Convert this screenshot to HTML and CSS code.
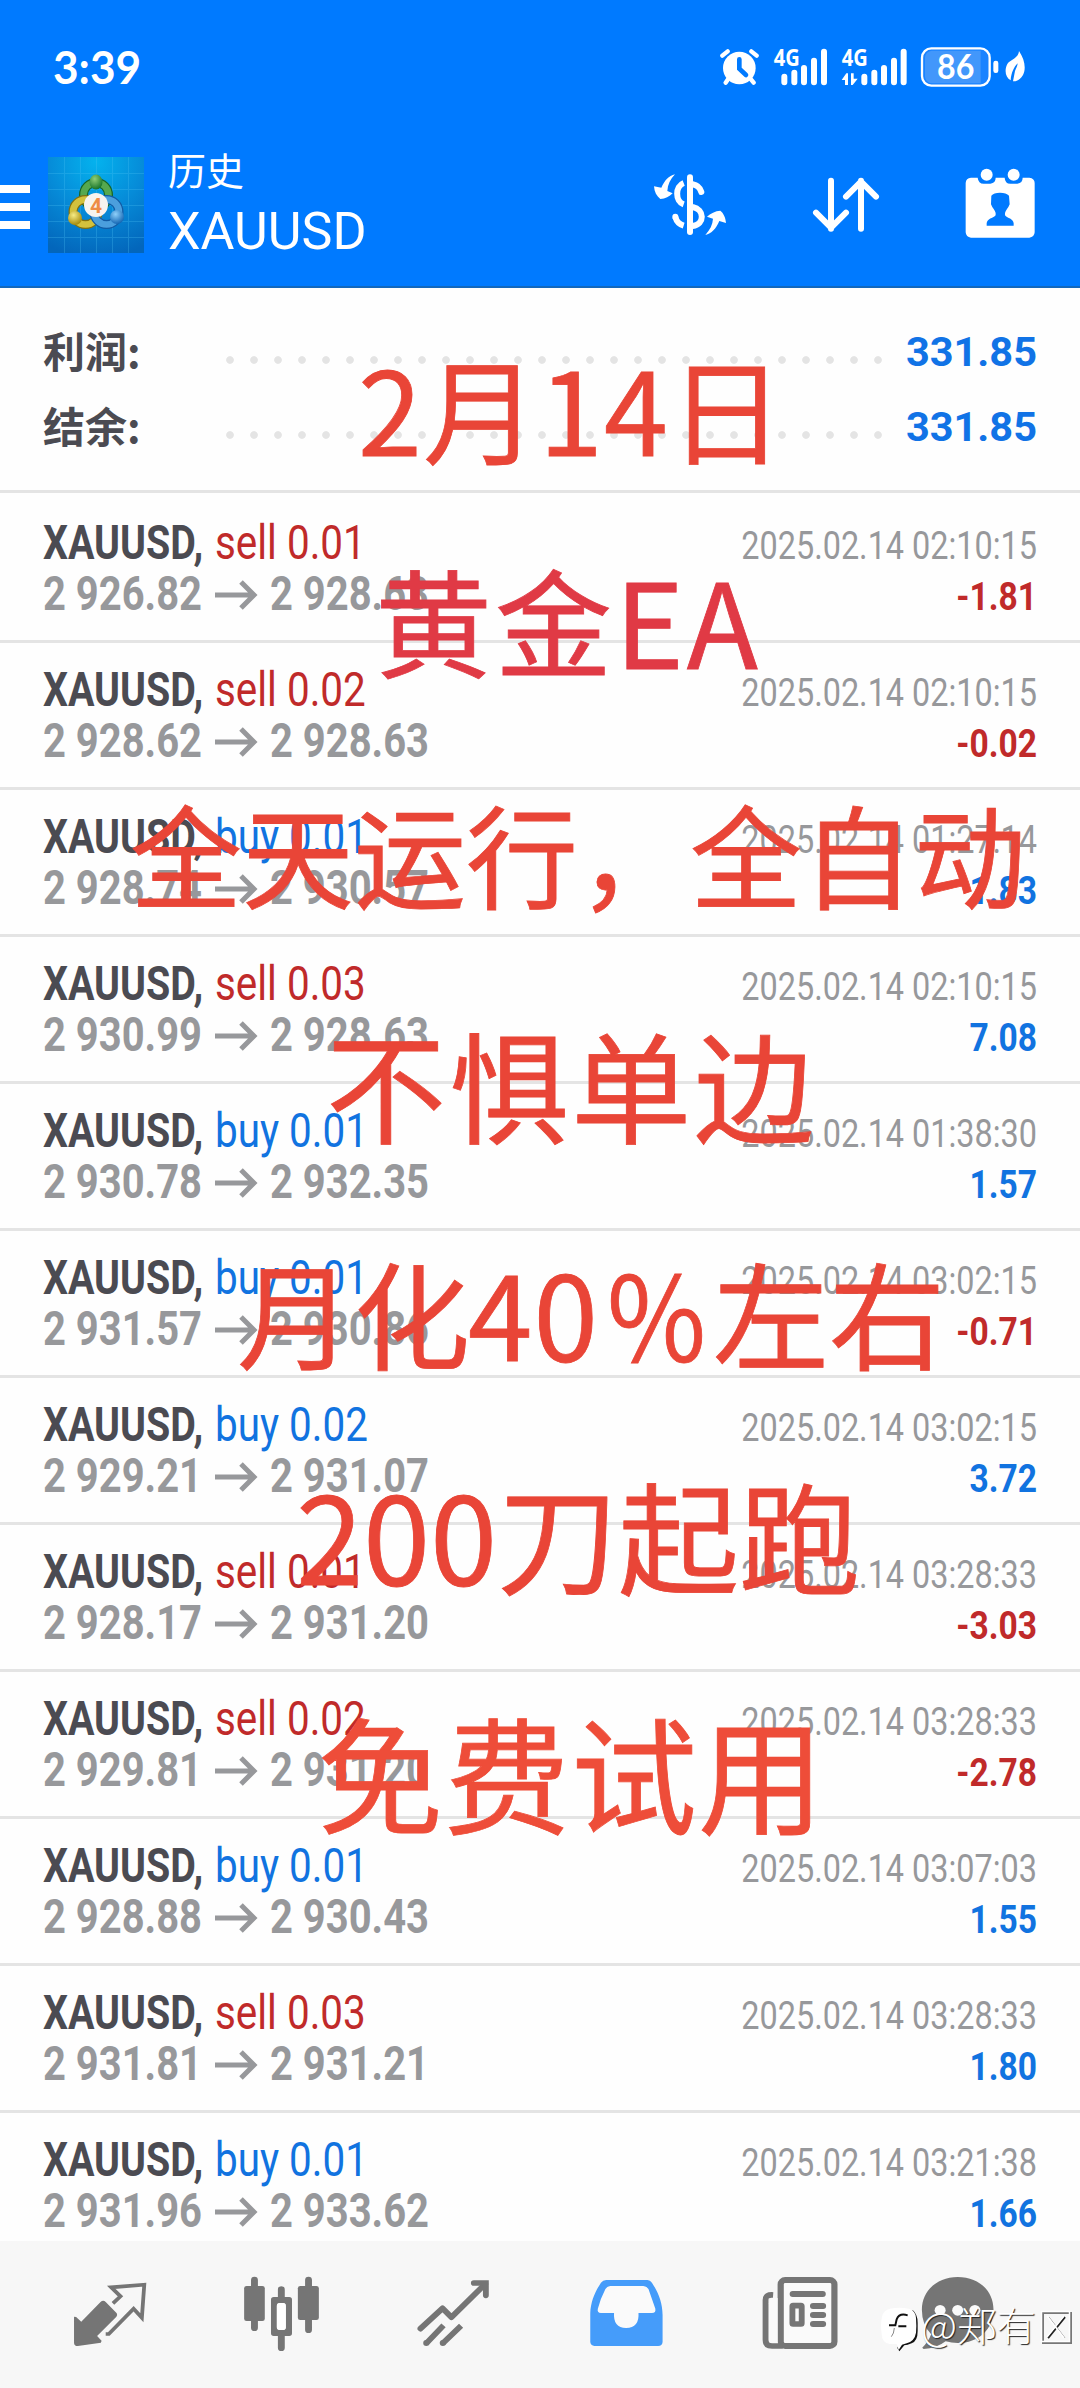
FILE: index.html
```html
<!DOCTYPE html>
<html lang="zh-CN">
<head>
<meta charset="utf-8">
<title>历史 XAUUSD</title>
<link rel="stylesheet" href="styles.css">
</head>
<body>
<div class="screen">
  <header class="header">
    <div class="status">
      <span class="clock">3:39</span>
      <div class="status-icons">
        <svg class="st-alarm" viewBox="360 132 140 141">
          <g fill="#fff"><circle cx="418" cy="204" r="49"/></g>
          <g stroke="#fff" stroke-width="13" stroke-linecap="round" fill="none"><path d="M367 167L383 154M470 167L454 154M384 238L377 248M453 238L461 248"/></g>
          <path d="M418 178V206L438 225" fill="none" stroke="#007aff" stroke-width="14" stroke-linecap="round"/>
        </svg>
        <svg class="st-sig1" viewBox="500 132 210 141">
          <text class="net" x="520" y="199" textLength="78" lengthAdjust="spacingAndGlyphs">4G</text>
          <path d="M552 230V247M582 218V247M611 204V247M641 182V247M671 155V247" stroke="#fff" stroke-width="18" stroke-linecap="round"/>
        </svg>
        <svg class="st-sig2" viewBox="710 132 230 141">
          <text class="net" x="724" y="199" textLength="78" lengthAdjust="spacingAndGlyphs">4G</text>
          <path d="M792 230V247M822 218V247M851 204V247M881 182V247M910 155V247" stroke="#fff" stroke-width="18" stroke-linecap="round"/>
          <path d="M724 240L738 220H743V255H734V240ZM752 220H760V236H772L757 255H752Z" fill="#fff"/>
        </svg>
        <svg class="st-batt" viewBox="940 132 265 141">
          <rect x="967" y="145" width="203" height="112" rx="28" fill="#1a83ff" stroke="#fff" stroke-width="7"/>
          <path d="M976 172Q978 154 996 152H1143V250H996Q978 248 976 230Z" fill="#4297fb"/>
          <rect x="1181" y="182" width="15" height="37" rx="7" fill="#fff"/>
          <text class="pct" x="1012" y="237" textLength="112" lengthAdjust="spacingAndGlyphs">86</text>
        </svg>
        <svg class="st-leaf" viewBox="1205 132 85 141">
          <path d="M1256 153C1273 178 1278 205 1268 225C1260 240 1248 244 1238 244L1244 213C1248 203 1251 199 1252 190C1241 201 1233 217 1231 241C1216 233 1211 212 1221 192C1231 178 1254 176 1256 153Z" fill="#fff"/>
        </svg>
      </div>
    </div>
    <div class="appbar">
      <svg class="menu" viewBox="0 0 30 52"><path d="M0 4h30v8H0zM0 22h30v8H0zM0 40h30v8H0z" fill="#fff"/></svg>
      <svg class="logo" viewBox="0 0 96 96">
        <defs>
          <radialGradient id="bg" cx=".5" cy=".05" r="1"><stop offset="0" stop-color="#04b2ee"/><stop offset=".5" stop-color="#068bd8"/><stop offset="1" stop-color="#0366bb"/></radialGradient>
          <radialGradient id="gn" cx=".4" cy=".3" r=".7"><stop offset="0" stop-color="#8fce78"/><stop offset="1" stop-color="#187429"/></radialGradient>
          <radialGradient id="yl" cx=".4" cy=".3" r=".7"><stop offset="0" stop-color="#f7ec85"/><stop offset="1" stop-color="#a58a0b"/></radialGradient>
          <radialGradient id="bl" cx=".4" cy=".3" r=".7"><stop offset="0" stop-color="#8ed0fa"/><stop offset="1" stop-color="#1467b4"/></radialGradient>
        </defs>
        <path d="M0 0H96V96H0Z" fill="url(#bg)"/>
        <path d="M16.500 0V96M32.500 0V96M48.500 0V96M64.500 0V96M80.500 0V96M0 16.500H96M0 32.500H96M0 48.500H96M0 64.500H96M0 80.500H96" stroke="#4fc4f5" stroke-width="1" opacity=".28"/>
        <g fill="none">
          <circle cx="48" cy="38" r="12.500" stroke="#176526" stroke-width="9"/><circle cx="48" cy="38" r="12.500" stroke="#56a84f" stroke-width="6.500"/>
          <circle cx="37.500" cy="55" r="12.500" stroke="#807010" stroke-width="9"/><circle cx="37.500" cy="55" r="12.500" stroke="#d3c13d" stroke-width="6.500"/>
          <circle cx="58.500" cy="55" r="12.500" stroke="#125ba4" stroke-width="9"/><circle cx="58.500" cy="55" r="12.500" stroke="#4b9fdd" stroke-width="6.500"/>
        </g>
        <ellipse cx="48" cy="25" rx="6.500" ry="7.500" fill="url(#gn)"/>
        <circle cx="27" cy="61" r="7" fill="url(#yl)"/>
        <circle cx="69" cy="60" r="7" fill="url(#bl)"/>
        <circle cx="48" cy="48" r="12" fill="#f7f3ef"/>
        <text class="logo-num" x="42" y="56">4</text>
      </svg>
      <div class="titles"><div class="title">历史</div><div class="subtitle">XAUUSD</div></div>
      <div class="actions">
        <svg class="act-dollar" viewBox="150 505 240 220">
          <g fill="none" stroke="#fff" stroke-width="18">
            <path d="M251 550C225 560 225 605 251 614"/>
            <path d="M278 554C290 556 300 564 304 577" stroke-linecap="round"/>
            <path d="M278 622C314 629 315 674 278 679"/>
            <path d="M226 652C230 667 238 674 251 678"/><path d="M226 651V652" stroke-linecap="round"/>
          </g>
          <path d="M270 533V697" stroke="#fff" stroke-width="18" stroke-linecap="round"/>
          <path d="M225 524C206 529 194 542 184 564L162 560C163 577 170 590 181 598C196 598 208 591 218 581L202 574C203 555 211 539 225 524Z" fill="#fff"/>
          <path d="M316 706C335 702 348 687 358 664L378 670C377 653 370 640 361 633C346 634 331 641 321 651L339 657C338 675 330 690 316 706Z" fill="#fff"/>
        </svg>
        <svg class="act-sort" viewBox="630 505 220 220">
          <path d="M693 543V687M648 639L693 684L738 639M783 687V543M738 591L783 546L828 591" fill="none" stroke="#fff" stroke-width="18" stroke-linecap="round" stroke-linejoin="round"/>
        </svg>
        <svg class="act-cal" viewBox="1090 505 220 220">
          <path d="M1114 534H1134Q1136 552 1152 552H1172Q1188 550 1188 534H1215Q1216 552 1232 552H1253Q1269 550 1269 534H1289Q1305 536 1305 550V698Q1304 713 1289 714H1114Q1099 713 1098 698V550Q1099 535 1114 534Z" fill="#fff"/>
          <circle cx="1161" cy="525" r="18" fill="#fff"/><circle cx="1242" cy="525" r="18" fill="#fff"/>
          <path d="M1175 588Q1182 579 1201 579Q1220 579 1228 588L1230 614Q1227 622 1222 628Q1213 640 1217 648C1223 655 1241 656 1242 671V678H1161V671C1162 656 1180 655 1187 648Q1191 640 1182 628Q1177 622 1174 614Z" fill="#007aff"/>
        </svg>
      </div>
    </div>
  </header>

  <section class="summary">
    <div class="sum-row"><span class="sum-label">利润:</span><span class="dots"></span><span class="sum-value">331.85</span></div>
    <div class="sum-row"><span class="sum-label">结余:</span><span class="dots"></span><span class="sum-value">331.85</span></div>
  </section>

  <main class="deals" id="deals"></main>

  <nav class="tabs">
    <svg class="tab" viewBox="69.700 63 499.500 441" preserveAspectRatio="none">
      <path d="M215 290L221 291L236 305L292 246Q300 239 307 246L339 280Q342 285 338 290L282 348L295 362L293 368L226 378Q215 378 215 368Z"/>
      <path d="M328 250L350 229L323 202L419 194L412 293L388 266L316 342H307" fill="none" stroke="#757575" stroke-width="11"/>
    </svg>
    <svg class="tab" viewBox="569.200 63 499.500 441" preserveAspectRatio="none">
      <path d="M739 180V323M896 180V329M817 209V240M817 340V383" stroke="#757575" stroke-width="20" stroke-linecap="round"/>
      <rect x="709" y="198" width="60" height="105" rx="7"/><rect x="865" y="198" width="61" height="102" rx="7"/>
      <path fill-rule="evenodd" d="M795 231H840Q848 231 848 239V340Q848 348 840 348H795Q787 348 787 340V239Q787 231 795 231ZM813 249Q804 249 804 258V321Q804 330 813 330H822Q830 330 830 321V258Q830 249 822 249Z"/>
      <rect x="804" y="249" width="26" height="81" rx="8" fill="#fff"/>
    </svg>
    <svg class="tab" viewBox="1068.700 63 499.500 441" preserveAspectRatio="none">
      <g fill="none" stroke="#757575" stroke-width="17" stroke-linejoin="round">
        <path d="M1221 326L1285 265L1311 292L1409 192" stroke-linecap="round"/>
        <path d="M1376 189H1411V226" stroke-linecap="round" stroke-linejoin="miter"/>
        <path d="M1288 316L1238 370M1339 317L1286 370"/>
      </g>
      <circle cx="1238" cy="369" r="9"/><circle cx="1286" cy="369" r="9"/>
    </svg>
    <svg class="tab" viewBox="0 63 499.500 441" preserveAspectRatio="none">
      <path fill="#459cfa" d="M192 180H312Q320 180 325 188C343 216 356 248 356 285V366Q355 378 343 378H158Q147 377 146 366V280C147 245 160 215 177 188Q183 180 192 180Z"/>
      <path fill="#fafafa" d="M204 198H300Q311 199 315 207L335 266Q337 279 325 279H286Q289 323 250 324Q212 323 215 279H177Q165 278 168 266Q175 237 190 207Q194 199 204 198Z"/>
    </svg>
    <svg class="tab" viewBox="499.500 63 499.500 441" preserveAspectRatio="none">
      <rect x="699" y="180" width="156" height="198" rx="13" fill="#fafafa" stroke="#757575" stroke-width="18"/>
      <path d="M677 225C662 224 655 228 655 240V359Q655 378 674 378H705" fill="none" stroke="#757575" stroke-width="17"/>
      <path d="M665 250Q666 236 677 234H690V369H672Q665 369 665 360Z" fill="#fafafa"/>
      <path d="M734 222H821M793 258H822M793 285H822M793 312H822" stroke="#757575" stroke-width="18" stroke-linecap="round"/>
      <rect x="733" y="257" width="27" height="55" rx="2" fill="#fafafa" stroke="#757575" stroke-width="17" stroke-linejoin="round"/>
    </svg>
    <svg class="tab" viewBox="999 63 499.500 441" preserveAspectRatio="none">
      <path d="M1213 171C1275 171 1317 213 1317 269C1317 327 1274 369 1213 369Q1195 369 1178 364Q1152 385 1114 387L1110 383Q1128 366 1136 343Q1109 314 1109 269C1109 213 1153 171 1213 171Z"/>
      <g fill="#fafafa"><circle cx="1162" cy="271" r="16"/><circle cx="1213" cy="271" r="16"/><circle cx="1263" cy="271" r="16"/></g>
    </svg>
  </nav>

  <svg class="notes" viewBox="0 0 1080 2388">
    <g fill="#e94537" stroke="#e94537" stroke-width=".8">
      <text x="358" y="456" font-size="115" textLength="426">2月14日</text>
      <text x="375" y="669" font-size="117" textLength="383" fill="#e03a45" stroke="#e03a45">黄金EA</text>
      <text x="130" y="901" font-size="112" textLength="896">全天运行，全自动</text>
      <text x="326" y="1135" font-size="120" textLength="488">不惧单边</text>
      <text y="1361" font-size="116"><tspan x="237" textLength="233">月化</tspan><tspan x="468" textLength="130">40</tspan><tspan x="607" textLength="99" lengthAdjust="spacingAndGlyphs">%</tspan><tspan x="713" textLength="232">左右</tspan></text>
      <text x="296" y="1585" font-size="121" textLength="564">200刀起跑</text>
      <text x="317" y="1825" font-size="126" textLength="507" fill="#ee4d39" stroke="#ee4d39">免费试用</text>
    </g>
  </svg>

  <div class="watermark">
    <svg class="wm-logo" viewBox="30 50 120 140">
      <path d="M128 62Q143 75 143 100V125Q143 155 125 162Q112 168 103 168L88 186L82 176Z" fill="#111"/>
      <path d="M60 58Q88 52 116 58Q137 64 138 86Q140 112 138 130Q134 155 110 162L96 166L86 182L80 164H58Q36 160 35 135Q31 105 36 82Q40 62 60 58Z" fill="#fff"/>
      <path d="M113 78Q88 70 80 90L76 108H57M85 111H109" fill="none" stroke="#111" stroke-width="6"/>
      <path d="M73 116Q72 133 64 142" fill="none" stroke="#888" stroke-width="3"/>
    </svg>
    <span class="wm-name">@郑有</span>
    <svg class="wm-box" viewBox="0 0 34 36"><g fill="none" stroke-width="2"><path d="M3 3H31V33H3Z" stroke="#777"/><path d="M25 7L8 28" stroke="#222"/><path d="M9 7L25 28" stroke="#999" stroke-width="1"/><path d="M1.500 1.500H29.500V31.500H1.500ZM7 6L24 28M24 6L7 27" stroke="#fff" stroke-width="1.500"/></g></svg>
  </div>
</div>
<script src="deals.js"></script>
</body>
</html>
```

FILE: styles.css
```css
* { box-sizing: border-box; }
body { margin: 0; background: #fff; font-family: Roboto, "Noto Sans CJK SC", sans-serif; }
.screen { position: relative; width: 1080px; height: 2388px; display: flex; flex-direction: column; overflow: hidden; background: #fefefe; }

.header { height: 288px; flex: none; background: #007aff; border-bottom: 2px solid #1268bd; color: #fff; }
.status { height: 139px; display: flex; justify-content: space-between; align-items: flex-start; padding: 44px 50px 0 53px; }
.clock { font: 700 46px/45px Lato, sans-serif; transform: scaleX(.96); transform-origin: 0 50%; }
.status-icons { display: flex; }
.status-icons svg { height: 47px; display: block; }
.st-alarm { width: 46.67px; }
.st-sig1 { width: 70px; }
.st-sig2 { width: 76.67px; }
.st-batt { width: 88.33px; }
.st-leaf { width: 28.33px; }
.net { font: 700 72px "Open Sans", sans-serif; fill: #fff; }
.status-icons .st-sig1, .status-icons .st-sig2 { overflow: visible; }
.pct { font: 700 101px Lato, sans-serif; fill: #fff; }

.appbar { height: 132px; display: flex; align-items: center; padding-right: 43.3px; }
.menu { width: 30px; height: 52px; margin: 4px 18px 0 0; }
.logo { width: 96px; height: 96px; }
.logo-num { font: 700 21px Roboto, sans-serif; fill: #ee8b45; }
.titles { margin: -6px 0 0 24px; }
.title { font: 400 38px/60px "Noto Sans CJK SC", sans-serif; }
.subtitle { font-size: 52px; line-height: 66px; }
.actions { display: flex; flex: 1; justify-content: flex-end; }
.actions svg { height: 73.33px; display: block; }
.act-dollar { width: 80px; }
.act-sort { width: 73.33px; margin-left: 80px; }
.act-cal { width: 73.33px; margin-left: 80px; }

.summary { height: 205px; flex: none; border-bottom: 3px solid #e4e4e4; padding: 26px 43px 0; }
.sum-row { height: 75px; display: flex; align-items: center; }
.sum-label { width: 175px; font: 700 42px/71px "Noto Sans CJK SC", sans-serif; height: 75px; color: #4b4b52; }
.dots { width: 672px; height: 24px; margin-top: 17px; background: radial-gradient(circle, #e4e4e4 3.4px, transparent 4.2px) 0 0 / 24px 24px; }
.sum-value { flex: 1; text-align: right; font-weight: 700; font-size: 41.500px; color: #1173e6; }

.deals { flex: 1; min-height: 0; overflow: hidden; padding-top: 3px; }
.deal { height: 147px; padding: 20px 43px 0; border-bottom: 3px solid #e4e4e4; display: flex; justify-content: space-between; }
.line { display: flex; height: 51px; line-height: 54px; font-size: 48px; white-space: nowrap; }
.line span { display: block; transform-origin: 0 50%; }
.symbol { width: 172px; font-weight: 700; color: #4b4b52; transform: scaleX(.82); }
.side { transform: scaleX(.842); }
.price { width: 172px; font-weight: 700; color: #97989b; transform: scaleX(.832); }
.arrow { width: 43px; height: 30px; margin: 13px 12px 0 0; }
.deal-right { width: 400px; text-align: right; font-size: 39.500px; white-space: nowrap; }
.date, .profit { height: 51px; line-height: 60px; transform-origin: 100% 50%; }
.date { line-height: 59px; color: #97989b; transform: scaleX(.82); }
.profit { font-weight: 700; transform: scaleX(.85); }
.sell { color: #c02a2a; }
.buy { color: #1173e0; }

.tabs { height: 147px; flex: none; background: #f7f7f7; display: flex; padding-left: 24px; }
.tab { width: 172px; height: 147px; flex: none; fill: #757575; }

.notes { position: absolute; left: 0; top: 0; width: 1080px; height: 2388px; font-family: "Noto Sans CJK SC", sans-serif; }
.watermark { position: absolute; left: 880px; top: 2306px; display: flex; align-items: flex-start; }
.wm-logo { width: 40px; height: 46.700px; }
.wm-name { width: 116px; margin: -3px 0 0 1px; font: 300 39.500px/42px "Noto Sans CJK SC", sans-serif; color: #fff; text-shadow: 1px 1px 1px #222; white-space: nowrap; }
.wm-box { width: 34px; height: 36px; margin: 4px 0 0 3px; }
```

FILE: deals.js
```js
const deals = [
  ["sell 0.01", "2 926.82", "2 928.63", "2025.02.14 02:10:15", "-1.81"],
  ["sell 0.02", "2 928.62", "2 928.63", "2025.02.14 02:10:15", "-0.02"],
  ["buy 0.01", "2 928.74", "2 930.57", "2025.02.14 01:27:14", "1.83"],
  ["sell 0.03", "2 930.99", "2 928.63", "2025.02.14 02:10:15", "7.08"],
  ["buy 0.01", "2 930.78", "2 932.35", "2025.02.14 01:38:30", "1.57"],
  ["buy 0.01", "2 931.57", "2 930.86", "2025.02.14 03:02:15", "-0.71"],
  ["buy 0.02", "2 929.21", "2 931.07", "2025.02.14 03:02:15", "3.72"],
  ["sell 0.01", "2 928.17", "2 931.20", "2025.02.14 03:28:33", "-3.03"],
  ["sell 0.02", "2 929.81", "2 931.20", "2025.02.14 03:28:33", "-2.78"],
  ["buy 0.01", "2 928.88", "2 930.43", "2025.02.14 03:07:03", "1.55"],
  ["sell 0.03", "2 931.81", "2 931.21", "2025.02.14 03:28:33", "1.80"],
  ["buy 0.01", "2 931.96", "2 933.62", "2025.02.14 03:21:38", "1.66"]
];
document.getElementById("deals").innerHTML = deals.map(([side, open, close, date, profit]) => `
  <article class="deal">
    <div>
      <div class="line"><span class="symbol">XAUUSD,</span><span class="side ${side.split(" ")[0]}">${side}</span></div>
      <div class="line"><span class="price">${open}</span><svg class="arrow" viewBox="0 0 43 30"><path d="M0 15H39M26 2L39 15L26 28" fill="none" stroke="#97989b" stroke-width="5"/></svg><span class="price">${close}</span></div>
    </div>
    <div class="deal-right">
      <div class="date">${date}</div>
      <div class="profit ${profit[0] === "-" ? "sell" : "buy"}">${profit}</div>
    </div>
  </article>`).join("");
```
